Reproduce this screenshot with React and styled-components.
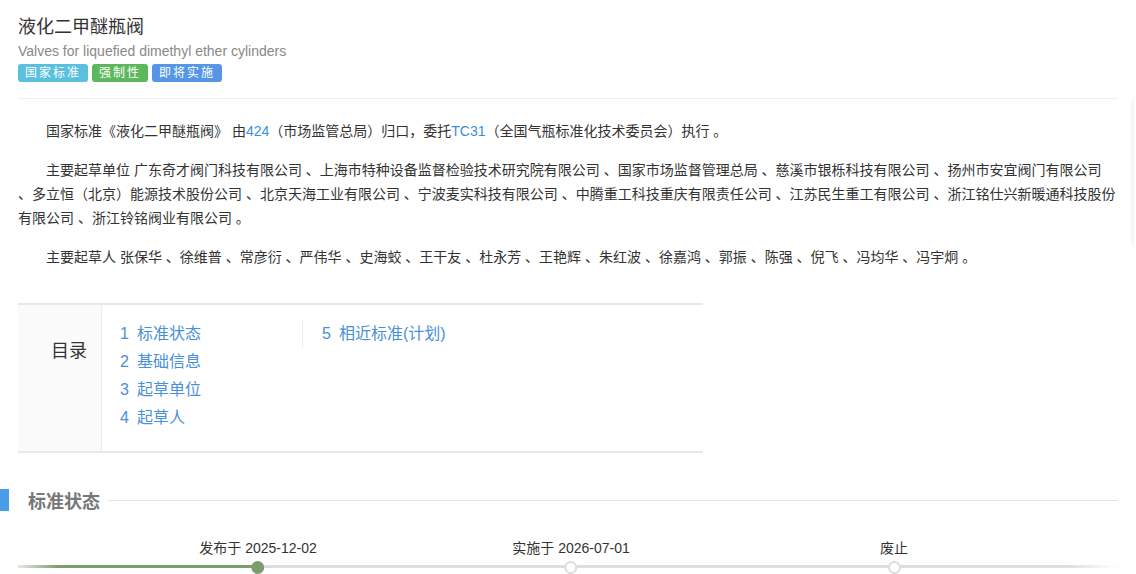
import React from 'react'
import styled, { createGlobalStyle } from 'styled-components'

const GlobalStyle = createGlobalStyle`
*{
  margin: 0;
  padding: 0;
  box-sizing: border-box;
}
html, body {
  overflow: hidden;
  background: #fff;
}
body {
  font-family: "Liberation Sans", "Noto Sans CJK SC", sans-serif;
  color: #333;
  font-size: 14px;
}
`

const Page = styled.div`
  width: 1118px;
  padding: 15px 0 0 18px;
`

const Title = styled.h1`
  font-size: 18px;
  font-weight: normal;
  line-height: 24px;
  color: #333;
`

const SubTitle = styled.div`
  margin-top: 2px;
  font-size: 14px;
  line-height: 20px;
  color: #888;
`

const Tags = styled.div`
  display: flex;
  gap: 4px;
  margin-top: 3px;
`

const Tag = styled.span`
  display: inline-block;
  height: 18px;
  line-height: 18px;
  padding: 0 7px;
  font-size: 12px;
  letter-spacing: 2px;
  color: #fff;
  border-radius: 3px;
  background: ${p => p.color};
`

const Divider = styled.div`
  height: 1px;
  margin-top: 16px;
  background: #eee;
`

const Intro = styled.div`
  margin-top: 20px;
`

const Para = styled.p`
  text-indent: 28px;
  line-height: 24px;
  margin-bottom: 15px;
  font-size: 14px;
  color: #333;
`

const Link = styled.a`
  color: #3c8dde;
  text-decoration: none;
`

const Toc = styled.div`
  display: flex;
  width: 685px;
  height: 150px;
  margin-top: 34px;
  border-top: 2px solid #e8e8e8;
  border-bottom: 2px solid #e8e8e8;
`

const TocHead = styled.div`
  width: 84px;
  padding: 33px 14px 0 0;
  background: #fafafa;
  border-right: 1px solid #eee;
  text-align: right;
  font-size: 18px;
  line-height: 26px;
  color: #333;
`

const TocBody = styled.div`
  display: flex;
  padding: 15px 0 0 18px;
`

const TocCol = styled.ul`
  list-style: none;
  width: ${p => p.w}px;
  padding-left: ${p => (p.divided ? 19 : 0)}px;
  border-left: ${p => (p.divided ? '1px solid #eee' : 'none')};
  align-self: flex-start;
`

const TocItem = styled.li`
  height: 28px;
  line-height: 28px;
  font-size: 16px;
  color: #4a90d9;
`

const Num = styled.span`
  margin-right: 8px;
`

const SectionHead = styled.div`
  display: flex;
  align-items: center;
  margin: 36px 0 0 -18px;
  height: 22px;
`

const Bar = styled.span`
  width: 9px;
  height: 22px;
  background: #4a9be8;
`

const SectionTitle = styled.h2`
  margin: 0 8px 0 19px;
  font-size: 18px;
  font-weight: bold;
  color: #777;
`

const Rule = styled.span`
  flex: 1;
  height: 1px;
  background: #e5e5e5;
`

const Timeline = styled.div`
  position: relative;
  height: 36px;
  margin-top: 27px;
`

const Track = styled.div`
  position: absolute;
  left: 0;
  right: 0;
  top: 27px;
  height: 3px;
  background: linear-gradient(to right,
    rgba(125,157,111,0.2) 0px, #7d9d6f 40px, #7d9d6f 240px,
    #dedede 240px, #dedede 1050px, rgba(222,222,222,0) 1100px);
`

const Step = styled.div`
  position: absolute;
  top: 0;
  transform: translateX(-50%);
  display: flex;
  flex-direction: column;
  align-items: center;
`

const StepLabel = styled.div`
  line-height: 20px;
  font-size: 14px;
  white-space: nowrap;
  color: #333;
`

const Dot = styled.span`
  margin-top: 3px;
  width: 13px;
  height: 13px;
  border-radius: 50%;
  background: ${p => (p.done ? '#7d9d6f' : '#fff')};
  border: 2px solid ${p => (p.done ? '#7d9d6f' : '#ddd')};
`

const SideEdge = styled.aside`
  position: fixed;
  left: 1134px;
  top: 100px;
  width: 200px;
  height: 145px;
  background: #fff;
  box-shadow: 0 0 5px rgba(0, 0, 0, 0.12);
`

const drafters = ['广东奇才阀门科技有限公司', '上海市特种设备监督检验技术研究院有限公司', '国家市场监督管理总局', '慈溪市银栎科技有限公司', '扬州市安宜阀门有限公司', '多立恒（北京）能源技术股份公司', '北京天海工业有限公司', '宁波麦实科技有限公司', '中腾重工科技重庆有限责任公司', '江苏民生重工有限公司', '浙江铭仕兴新暖通科技股份有限公司', '浙江铃铭阀业有限公司']

const people = ['张保华', '徐维普', '常彦衍', '严伟华', '史海蛟', '王干友', '杜永芳', '王艳辉', '朱红波', '徐嘉鸿', '郭振', '陈强', '倪飞', '冯均华', '冯宇炯']

const steps = [
  { left: 240, label: '发布于 2025-12-02', done: true },
  { left: 553, label: '实施于 2026-07-01' },
  { left: 876, label: '废止' }
]

export default function App() {
  return (
    <Page>
      <GlobalStyle />
      <Title>液化二甲醚瓶阀</Title>
      <SubTitle>Valves for liquefied dimethyl ether cylinders</SubTitle>
      <Tags>
        <Tag color="#5bc0de">国家标准</Tag>
        <Tag color="#5cb85c">强制性</Tag>
        <Tag color="#5596e6">即将实施</Tag>
      </Tags>
      <Divider />

      <Intro>
        <Para>
          国家标准《液化二甲醚瓶阀》 由<Link>424</Link>（市场监管总局）归口，委托<Link>TC31</Link>（全国气瓶标准化技术委员会）执行 。
        </Para>
        <Para>主要起草单位 {drafters.join(' 、')} 。</Para>
        <Para>主要起草人 {people.join(' 、')} 。</Para>
      </Intro>

      <Toc>
        <TocHead>目录</TocHead>
        <TocBody>
          <TocCol w={182}>
            <TocItem><Num>1</Num>标准状态</TocItem>
            <TocItem><Num>2</Num>基础信息</TocItem>
            <TocItem><Num>3</Num>起草单位</TocItem>
            <TocItem><Num>4</Num>起草人</TocItem>
          </TocCol>
          <TocCol w={220} divided>
            <TocItem><Num>5</Num>相近标准(计划)</TocItem>
          </TocCol>
        </TocBody>
      </Toc>

      <SectionHead>
        <Bar />
        <SectionTitle>标准状态</SectionTitle>
        <Rule />
      </SectionHead>

      <Timeline>
        <Track />
        {steps.map(s => (
          <Step key={s.label} style={{ left: s.left }}>
            <StepLabel>{s.label}</StepLabel>
            <Dot done={s.done} />
          </Step>
        ))}
      </Timeline>

      <SideEdge />
    </Page>
  )
}
